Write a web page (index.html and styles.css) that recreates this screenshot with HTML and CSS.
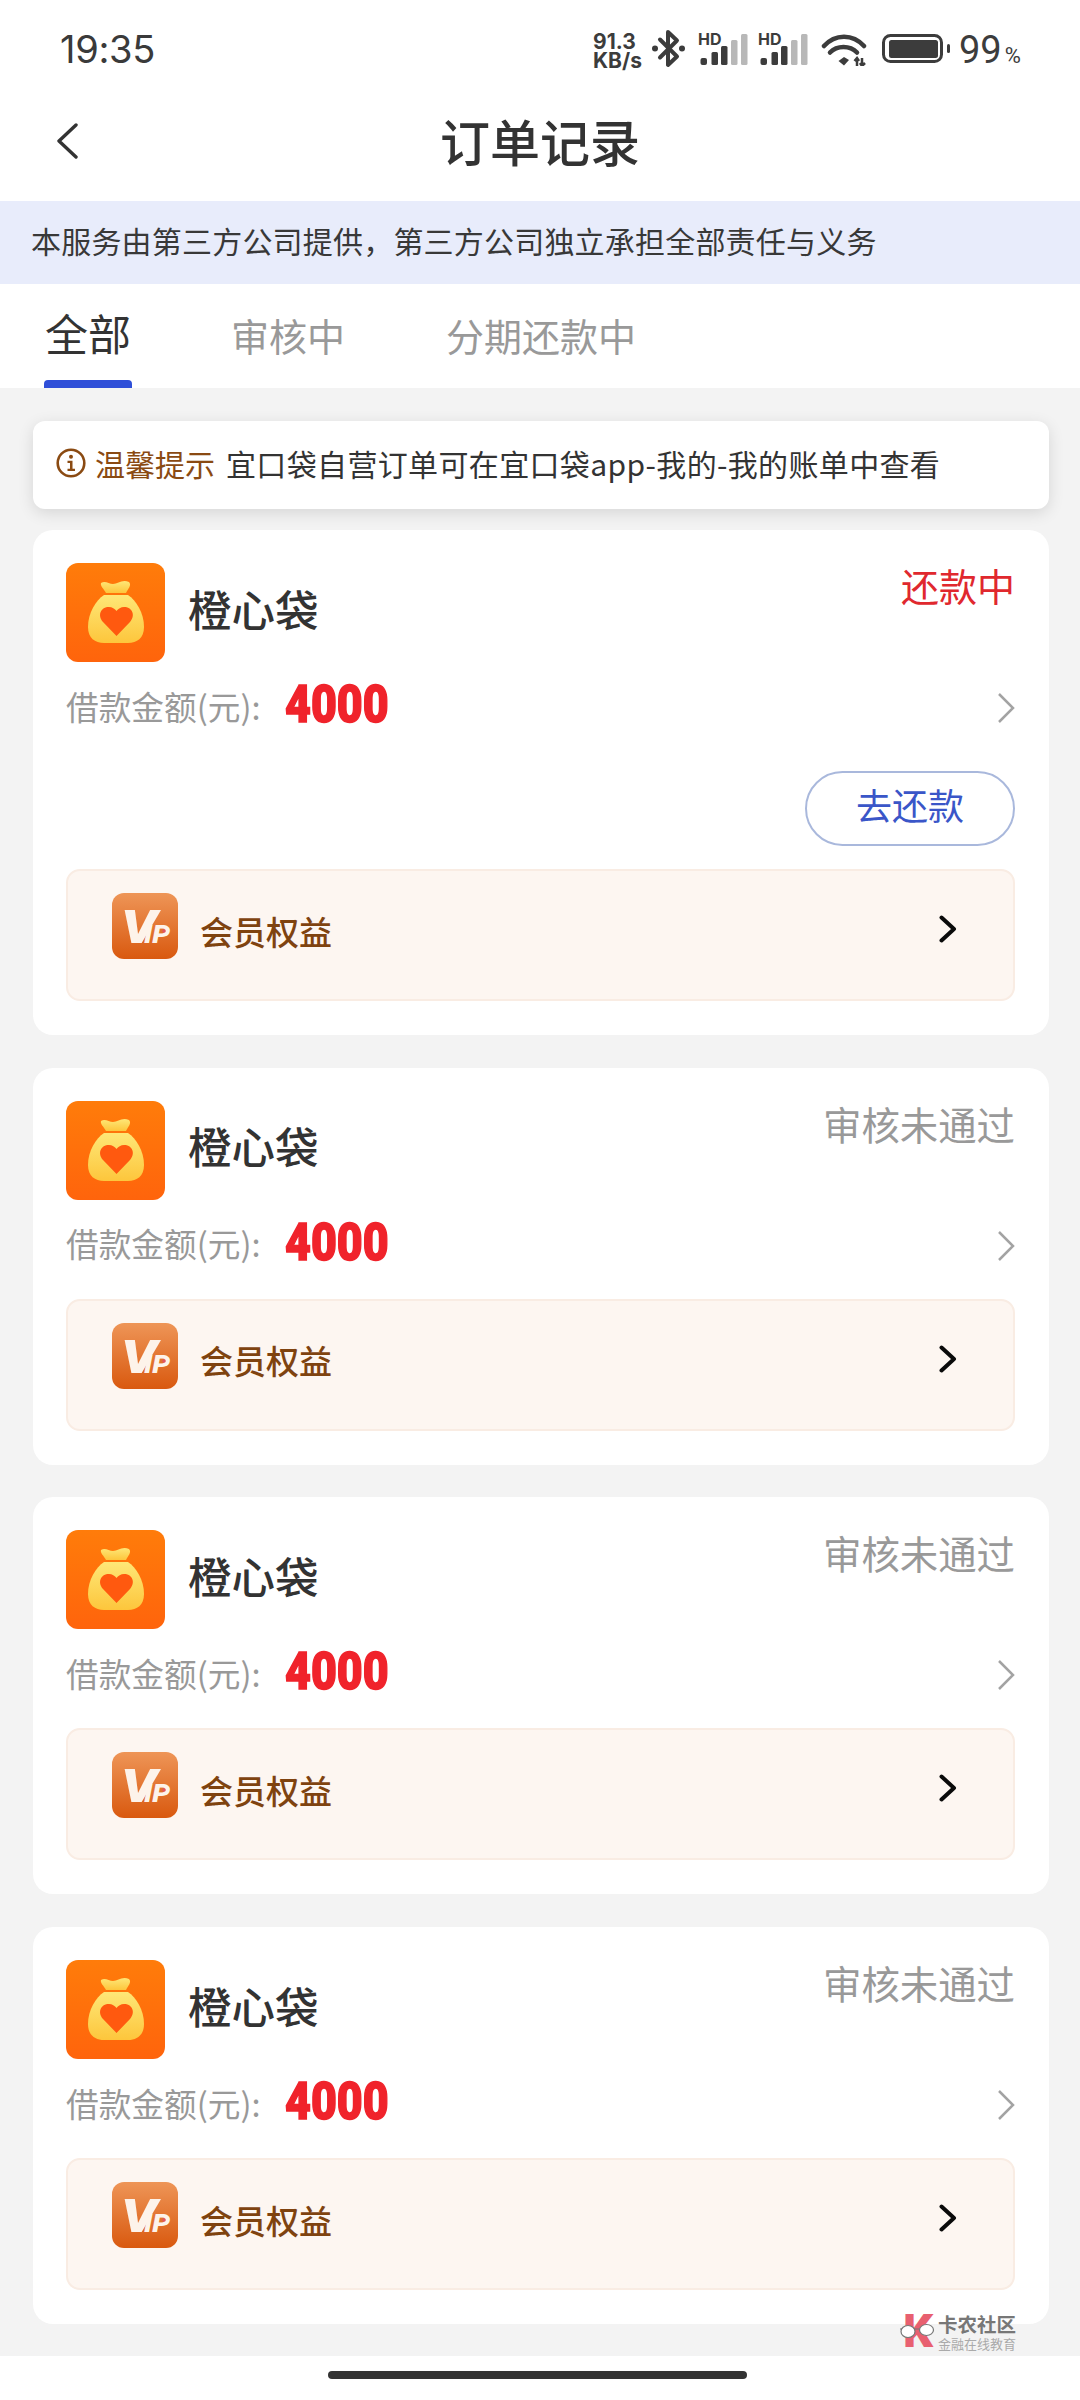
FILE: index.html
```html
<!DOCTYPE html>
<html lang="zh-CN">
<head>
<meta charset="utf-8">
<title>订单记录</title>
<link rel="stylesheet" href="styles.css">
</head>
<body>
<svg class="defs" width="0" height="0" aria-hidden="true">
  <defs>
    <linearGradient id="bagbg" x1="0" y1="0" x2="0" y2="1"><stop offset="0" stop-color="#ff7c0a"/><stop offset="1" stop-color="#ff640c"/></linearGradient>
    <linearGradient id="bagfill" x1="0" y1="0" x2="0" y2="1"><stop offset="0" stop-color="#fee777"/><stop offset="1" stop-color="#fdc63c"/></linearGradient>
    <linearGradient id="vipbg" x1="0" y1="0" x2="0" y2="1"><stop offset="0" stop-color="#ee9557"/><stop offset="1" stop-color="#d9590f"/></linearGradient>
    <symbol id="bag" viewBox="0 0 99 99">
      <rect width="99" height="99" rx="12" fill="url(#bagbg)"/>
      <path fill="url(#bagfill)" d="M35 20C39 17 43 21 47 21C52 21 56 16 63 19C66 22 62 26 60 30H40C38 26 34 23 35 20Z"/>
      <path fill="url(#bagfill)" d="M38 32C30 37 22 50 22 64C22 75 29 80 38 80H62C71 80 78 75 78 64C78 50 70 37 62 32Z"/>
      <path fill="#ff590f" d="M50.500 73L37 59C31 52 35 44 43 44C46 44 49 46 50.500 48C52 46 55 44 58 44C66 44 70 52 64 59Z"/>
    </symbol>
    <symbol id="vip" viewBox="0 0 66 66">
      <rect width="66" height="66" rx="12" fill="url(#vipbg)"/>
      <text x="9" y="50" class="vip-v" textLength="36" lengthAdjust="spacingAndGlyphs">V</text>
      <text x="32" y="50" class="vip-ip" textLength="26" lengthAdjust="spacingAndGlyphs">IP</text>
      <circle cx="52" cy="38" r="1.800" fill="#e0555f"/>
    </symbol>
    <symbol id="sig" viewBox="0 0 50 33">
      <text x="0" y="12" class="hd">HD</text>
      <rect x="2.500" y="25" width="6.500" height="7" rx="2" fill="#3c3c3c"/>
      <rect x="13.500" y="19" width="6.500" height="13" rx="1.500" fill="#3c3c3c"/>
      <rect x="23" y="13" width="6.500" height="19" rx="1.500" fill="#3c3c3c"/>
      <rect x="33" y="7" width="6.500" height="25" rx="1.500" fill="#b8b8b8"/>
      <rect x="43" y="1" width="6.500" height="31" rx="1.500" fill="#b8b8b8"/>
    </symbol>
    <symbol id="chev-gray" viewBox="0 0 18 32"><path d="M2 2L16 16L2 30" fill="none" stroke="#a3a3a3" stroke-width="2.500"/></symbol>
    <symbol id="chev-black" viewBox="0 0 18 28"><path d="M2.500 2.500L15 14L2.500 25.500" fill="none" stroke="#0a0a0a" stroke-width="4" stroke-linecap="round" stroke-linejoin="round"/></symbol>
  </defs>
</svg>
<div class="page">
  <header class="status">
    <span class="time">19:35</span>
    <div class="sys">
      <div class="speed"><span>91.3</span><span>KB/s</span></div>
      <svg class="bt" viewBox="0 0 35 39"><path d="M9 10.500L26 27.500L17 36V3L26 11.500L9 28.500" fill="none" stroke="#3c3c3c" stroke-width="4" stroke-linejoin="round" stroke-linecap="round"/><circle cx="4" cy="19.500" r="3" fill="#3c3c3c"/><circle cx="31" cy="19.500" r="3" fill="#3c3c3c"/></svg>
      <svg class="sig"><use href="#sig"/></svg>
      <svg class="sig sig2"><use href="#sig"/></svg>
      <svg class="wifi" viewBox="0 0 46 34">
        <path d="M3 14C14 1.500 32 1.500 43 14" fill="none" stroke="#3c3c3c" stroke-width="4.500" stroke-linecap="round"/>
        <path d="M9 20.500C16 13 29 13 36 20.500" fill="none" stroke="#3c3c3c" stroke-width="4.500" stroke-linecap="round"/>
        <path d="M17.500 29L23 25L28 28L23 33.500Z" fill="#3c3c3c"/>
        <path d="M36 34V27M33.500 29L36 26L38 29M41 26V33M39 31L41 34L44 31" fill="none" stroke="#3c3c3c" stroke-width="2.500"/>
      </svg>
      <svg class="batt" viewBox="0 0 68 29"><rect x="1.500" y="1.500" width="58" height="26" rx="7" fill="none" stroke="#3c3c3c" stroke-width="3"/><rect x="7" y="6" width="49" height="18" rx="2.500" fill="#3c3c3c"/><rect x="65" y="10" width="3" height="9" rx="1.500" fill="#3c3c3c"/></svg>
      <span class="pct">99<small>%</small></span>
    </div>
  </header>

  <nav class="nav">
    <svg class="back" viewBox="0 0 22 36"><path d="M20 2L3 18L20 34" fill="none" stroke="#333" stroke-width="3.400" stroke-linecap="round" stroke-linejoin="round"/></svg>
    <h1 class="title">订单记录</h1>
  </nav>

  <div class="banner">本服务由第三方公司提供，第三方公司独立承担全部责任与义务</div>

  <div class="tabs">
    <div class="tab active">全部</div>
    <div class="tab t2">审核中</div>
    <div class="tab t3">分期还款中</div>
  </div>

  <main class="main">
    <div class="notice">
      <svg class="info" viewBox="0 0 30 30"><circle cx="15" cy="15" r="13.300" fill="none" stroke="#8a4a12" stroke-width="2.600"/><circle cx="15" cy="8.800" r="2" fill="#8a4a12"/><path d="M11.500 12.800H16.500V20.800H19V23H11.500V20.800H14V15H11.500Z" fill="#8a4a12"/></svg>
      <span class="tip">温馨提示</span>
      <span class="tip-text">宜口袋自营订单可在宜口袋app-我的-我的账单中查看</span>
    </div>

    <section class="card">
      <div class="head">
        <svg class="logo"><use href="#bag"/></svg>
        <span class="name">橙心袋</span>
        <span class="state red">还款中</span>
      </div>
      <div class="amount">
        <span class="label">借款金额(元):</span>
        <span class="num">4000</span>
        <svg class="go"><use href="#chev-gray"/></svg>
      </div>
      <div class="actions"><button class="pay">去还款</button></div>
      <div class="vip">
        <svg class="vip-icon"><use href="#vip"/></svg>
        <span class="vip-text">会员权益</span>
        <svg class="vip-go"><use href="#chev-black"/></svg>
      </div>
    </section>

    <section class="card">
      <div class="head">
        <svg class="logo"><use href="#bag"/></svg>
        <span class="name">橙心袋</span>
        <span class="state">审核未通过</span>
      </div>
      <div class="amount">
        <span class="label">借款金额(元):</span>
        <span class="num">4000</span>
        <svg class="go"><use href="#chev-gray"/></svg>
      </div>
      <div class="vip">
        <svg class="vip-icon"><use href="#vip"/></svg>
        <span class="vip-text">会员权益</span>
        <svg class="vip-go"><use href="#chev-black"/></svg>
      </div>
    </section>

    <section class="card">
      <div class="head">
        <svg class="logo"><use href="#bag"/></svg>
        <span class="name">橙心袋</span>
        <span class="state">审核未通过</span>
      </div>
      <div class="amount">
        <span class="label">借款金额(元):</span>
        <span class="num">4000</span>
        <svg class="go"><use href="#chev-gray"/></svg>
      </div>
      <div class="vip">
        <svg class="vip-icon"><use href="#vip"/></svg>
        <span class="vip-text">会员权益</span>
        <svg class="vip-go"><use href="#chev-black"/></svg>
      </div>
    </section>

    <section class="card">
      <div class="head">
        <svg class="logo"><use href="#bag"/></svg>
        <span class="name">橙心袋</span>
        <span class="state">审核未通过</span>
      </div>
      <div class="amount">
        <span class="label">借款金额(元):</span>
        <span class="num">4000</span>
        <svg class="go"><use href="#chev-gray"/></svg>
      </div>
      <div class="vip">
        <svg class="vip-icon"><use href="#vip"/></svg>
        <span class="vip-text">会员权益</span>
        <svg class="vip-go"><use href="#chev-black"/></svg>
      </div>
    </section>

    <div class="mark">
      <svg class="mark-logo" viewBox="0 0 38 60">
        <text x="3" y="45" class="mark-k">K</text>
        <path d="M0 27H33" fill="none" stroke="#777" stroke-width="1.200"/>
        <ellipse cx="8" cy="29.500" rx="7" ry="6" fill="#fff" stroke="#777" stroke-width="1.200"/>
        <ellipse cx="26.500" cy="28" rx="7" ry="5.500" fill="#fff" stroke="#777" stroke-width="1.200"/>
      </svg>
      <div class="mark-text"><b>卡农社区</b><span>金融在线教育</span></div>
    </div>
  </main>

  <footer class="home"><i class="bar"></i></footer>
</div>
</body>
</html>
```
FILE: styles.css
```css
* { box-sizing: border-box; }
html, body { margin: 0; padding: 0; background: #fff; }
body { font-family: "Noto Sans CJK SC", "Noto Sans", sans-serif; color: #333; }
.defs { position: absolute; }
.page { width: 1080px; height: 2400px; overflow: hidden; display: flex; flex-direction: column; background: #fff; }

.status { height: 100px; display: flex; justify-content: space-between; align-items: flex-start; padding: 29px 59px 0 60px; }
.time { font-family: Inter, Roboto, sans-serif; font-size: 38px; line-height: 40px; color: #3a3a3a; letter-spacing: -0.3px; }
.sys { display: flex; align-items: flex-start; color: #3c3c3c; }
.speed { display: flex; flex-direction: column; font-family: Inter, Roboto, sans-serif; font-weight: 700; font-size: 21px; line-height: 19px; margin-top: 3px; width: 58px; }
.bt { width: 35px; height: 39px; margin-right: 12px; }
.sig { width: 50px; height: 33px; margin-top: 4px; margin-right: 10px; }
.sig2 { margin-right: 13px; }
.hd { font-family: Inter, Roboto, sans-serif; font-weight: 700; font-size: 16px; fill: #3c3c3c; }
.wifi { width: 46px; height: 34px; margin-top: 3px; margin-right: 15px; }
.batt { width: 68px; height: 29px; margin-top: 5px; margin-right: 9px; }
.pct { font-family: Roboto, Inter, sans-serif; font-size: 38px; line-height: 40px; display: flex; align-items: baseline; margin-top: 1px; width: 62px; }
.pct small { font-size: 22px; margin-left: 3px; }

.nav { height: 101px; display: flex; align-items: center; justify-content: center; position: relative; }
.back { position: absolute; left: 56px; top: 23px; width: 22px; height: 36px; }
.title { margin: 0 0 21px; font-size: 50px; font-weight: 500; line-height: 70px; color: #333; }

.banner { height: 83px; background: #e8ecfb; padding-left: 31px; font-size: 30px; line-height: 78px; letter-spacing: .2px; color: #383838; }

.tabs { height: 104px; display: flex; align-items: flex-start; padding-left: 44px; }
.tab { height: 104px; font-size: 38px; line-height: 50px; padding-top: 26px; color: #999; }
.tab.active { width: 88px; text-align: center; font-size: 43px; padding-top: 23px; color: #333; position: relative; }
.tab.active::after { content: ""; position: absolute; left: 0; right: 0; bottom: 0; height: 8px; border-radius: 4px 4px 0 0; background: #2f4fd8; }
.t2 { margin-left: 99px; }
.t3 { margin-left: 101px; }

.main { flex: none; height: 1968px; background: #f3f3f3; padding: 33px 31px 0 33px; display: flex; flex-direction: column; position: relative; }
.notice { flex: none; height: 88px; background: #fff; border-radius: 12px; box-shadow: 0 4px 16px rgba(0, 0, 0, .12); display: flex; align-items: center; padding: 0 0 4px 23px; margin-bottom: 21px; }
.info { width: 30px; height: 30px; margin-right: 9px; }
.tip { font-size: 30px; color: #8a4a12; margin-right: 11px; }
.tip-text { font-size: 30px; letter-spacing: .35px; color: #333; }

.card { flex: none; background: #fff; border-radius: 20px; padding: 33px 34px 34px 33px; margin-bottom: 32.700px; }
.head { display: flex; align-items: center; height: 99px; }
.logo { width: 99px; height: 99px; margin-right: 23px; }
.name { font-size: 43.500px; font-weight: 500; color: #333; line-height: 60px; margin-bottom: 8px; }
.state { margin: -3px 0 0 auto; align-self: flex-start; font-size: 38.400px; line-height: 50px; color: #999; }
.state.red { color: #e0282e; font-size: 38px; }

.amount { height: 60px; margin-top: 12px; display: flex; align-items: center; }
.label { font-size: 32.700px; color: #999; margin-right: 24px; padding-top: 2px; }
.num { font-family: Roboto, sans-serif; font-weight: 900; font-size: 52px; line-height: 60px; padding-top: 2px; color: #f0232b; display: inline-block; transform: scaleX(.86); transform-origin: left center; -webkit-text-stroke: 1.500px #f0232b; }
.go { width: 18px; height: 32px; margin-left: auto; position: relative; top: 4px; }

.actions { display: flex; justify-content: flex-end; margin-top: 37px; }
.pay { width: 210px; height: 75px; border: 2px solid #a9b8dc; border-radius: 38px; background: #fff; font-family: inherit; font-size: 36px; color: #3a56c8; padding: 0 0 9px; }

.vip { height: 132px; margin-top: 27px; background: #fdf6f1; border: 2px solid #f9ece3; border-radius: 14px; display: flex; align-items: center; padding: 0 56px 0 44px; }
.actions + .vip { margin-top: 23px; }
.vip-icon { width: 66px; height: 66px; margin-right: 22px; margin-bottom: 18px; }
.vip-text { font-size: 33px; font-weight: 500; color: #7f4310; margin-bottom: 9px; }
.vip-go { width: 18px; height: 28px; margin-left: auto; margin-bottom: 12px; }
.vip-v { font-family: Roboto, sans-serif; font-weight: 900; font-style: italic; font-size: 47px; fill: #fdf3ea; }
.vip-ip { font-family: Roboto, sans-serif; font-weight: 900; font-style: italic; font-size: 25px; fill: #fdf3ea; }

.mark { position: absolute; left: 900px; top: 1914px; display: flex; align-items: flex-start; }
.mark-logo { width: 38px; height: 60px; }
.mark-k { font-family: Roboto, sans-serif; font-weight: 900; font-size: 47px; fill: #e86070; }
.mark-text { display: flex; flex-direction: column; padding-top: 12px; }
.mark-text b { font-size: 19.500px; line-height: 20px; color: #777; font-weight: 700; }
.mark-text span { font-size: 13px; line-height: 14px; margin-top: 3px; color: #aaa; }

.home { height: 44px; display: flex; justify-content: center; align-items: flex-start; padding: 15px 5px 0 0; }
.bar { width: 419px; height: 8px; border-radius: 4px; background: #333; }
```
